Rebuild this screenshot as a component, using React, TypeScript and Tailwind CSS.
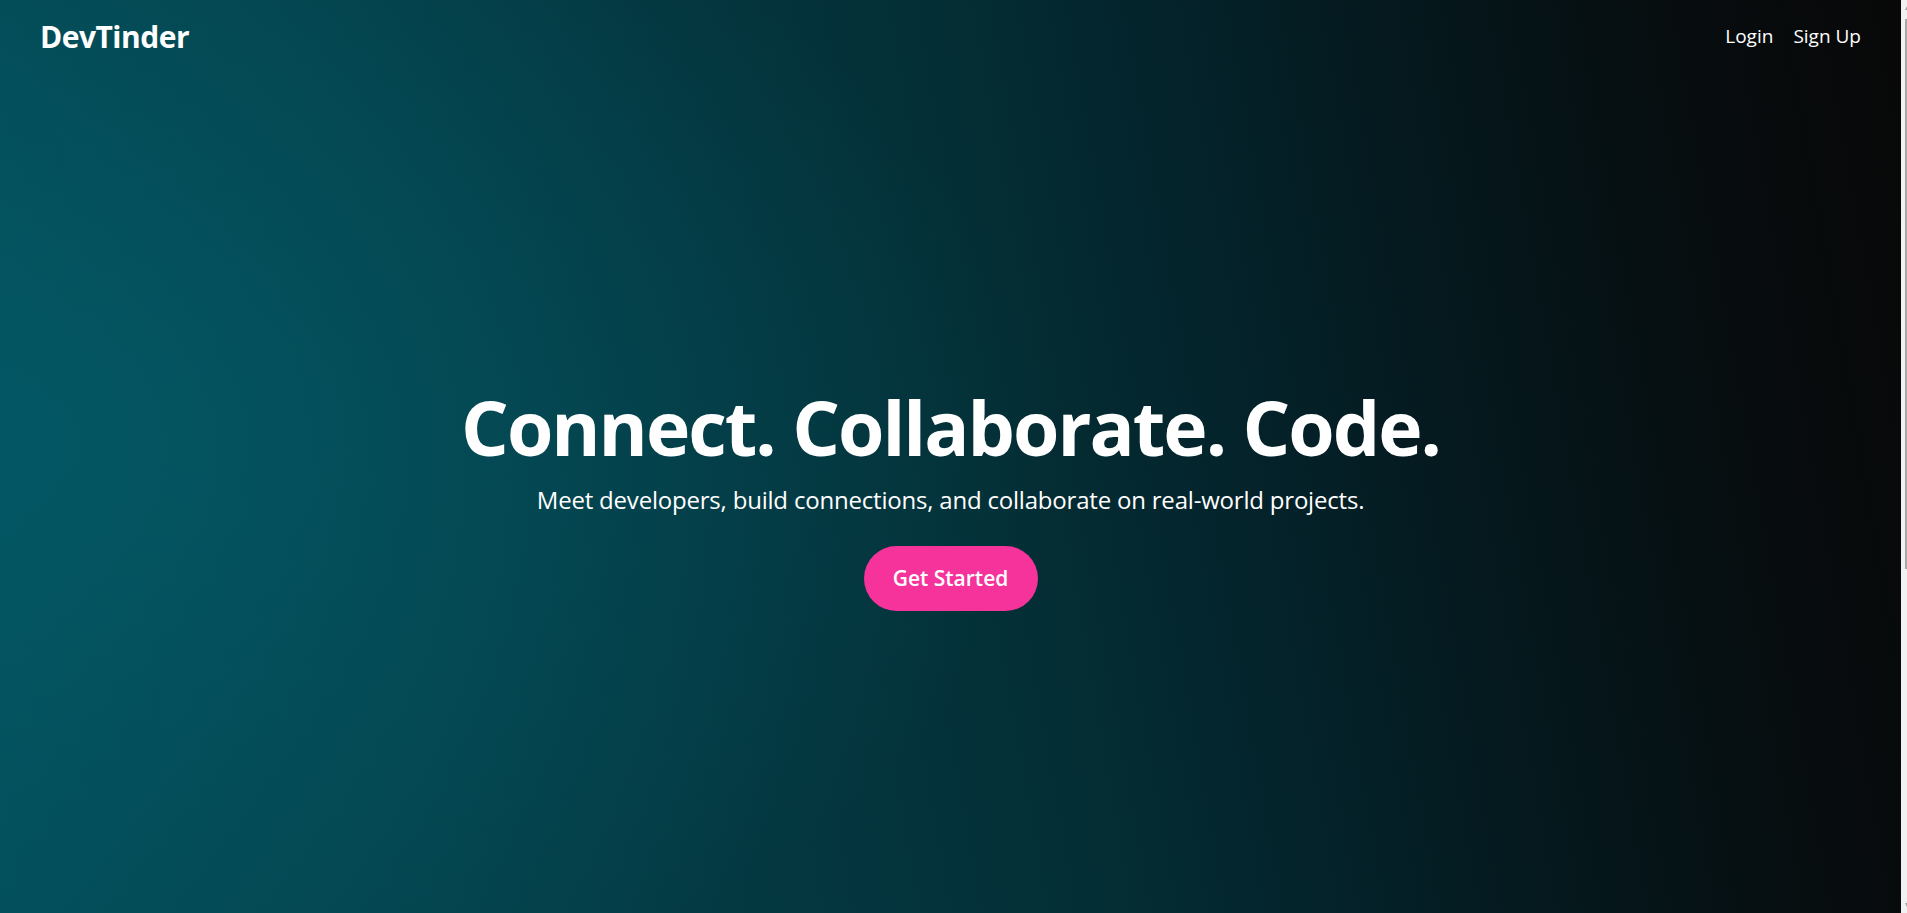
import React from "react";

export default function App() {
  return (
    <div
      className="flex h-[913px] w-[1907px] overflow-hidden"
      style={{ fontFamily: '"Open Sans", "Noto Sans", sans-serif' }}
    >
      <main className="flex h-full flex-1 flex-col bg-[radial-gradient(ellipse_55%_70%_at_0%_48%,rgba(3,96,110,0.6),rgba(3,96,110,0)),linear-gradient(80deg,#034d59_0%,#04424c_22%,#04363f_40%,#042f36_52%,#04222a_65%,#05161a_78%,#070c0e_90%,#080808_100%)] text-white">
        <nav className="flex h-[72px] items-center justify-between px-10">
          <span className="text-[30px] font-bold tracking-[-0.5px]">DevTinder</span>
          <div className="flex items-center gap-[20px] text-[19px]">
            <a className="cursor-pointer">Login</a>
            <a className="cursor-pointer">Sign Up</a>
          </div>
        </nav>
        <section className="flex flex-1 flex-col items-center pt-[318px]">
          <h1 className="text-[75px] font-bold leading-none tracking-[-2px]">
            Connect. Collaborate. Code.
          </h1>
          <p className="mt-[23px] text-[24px] leading-none tracking-[-0.2px]">
            Meet developers, build connections, and collaborate on real-world projects.
          </p>
          <button className="mt-[34px] h-[65px] w-[174px] rounded-full bg-[#f5339a] text-[21px] font-semibold text-white">
            Get Started
          </button>
        </section>
      </main>
      <aside className="flex h-full w-[6px] flex-col bg-[#f1f1f1] pl-[4px]">
        <div className="mt-[6px] h-0 w-0 border-b-[4px] border-l-[2px] border-b-[#a3a3a3] border-l-transparent" />
        <div className="mt-[9px] h-[550px] w-[2px] bg-[#a8a8a8]" />
        <div className="flex-1" />
        <div className="mb-[6px] h-0 w-0 border-t-[4px] border-l-[2px] border-t-[#a3a3a3] border-l-transparent" />
      </aside>
    </div>
  );
}
